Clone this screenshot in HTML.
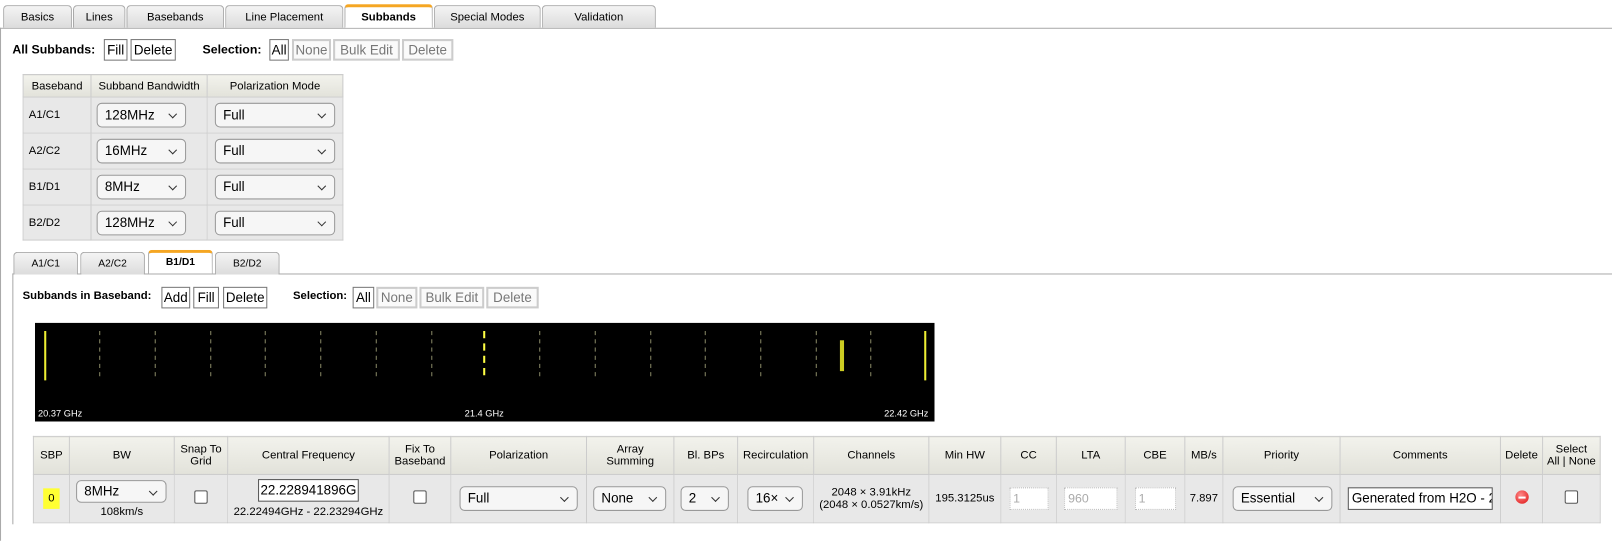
<!DOCTYPE html><html><head><style>
*{box-sizing:border-box}
body{margin:0;width:1612px;height:526px;background:#fff;font-family:"Liberation Sans",Arial,sans-serif;position:relative;overflow:hidden;color:#000}
#w{position:absolute;left:0;top:0;width:1568px;height:512px;transform:scale(1.02806);transform-origin:0 0}
.a{position:absolute}
.tab{position:absolute;height:22px;background:linear-gradient(#f4f4f4,#dcdcdc);border:1px solid #aaa;border-bottom:none;border-radius:4px 4px 0 0;font-size:11px;text-align:center;line-height:22px}
.tab.on{background:#fff;border-top:3px solid #f5a623;font-weight:bold;height:23px;line-height:20px}
.btn{position:absolute;height:21px;border:1px solid #777;background:#fff;font-size:13px;line-height:19px;text-align:center;padding:0}
.btn.dis{color:#777;border:2px solid #ccc;background:#fafafa;line-height:17px}
.lbl{position:absolute;font-size:12px;font-weight:bold}
.sel{position:absolute;height:24px;border:1px solid #999;border-radius:5px;background:#f6f6f6;font-size:13px;line-height:22px;padding-left:7px}
.sel:after{content:"";position:absolute;right:9px;top:7px;width:5px;height:5px;border-right:1.5px solid #333;border-bottom:1.5px solid #333;transform:rotate(45deg)}
table{border-collapse:collapse;position:absolute}
td,th{border:1px solid #ccc;padding:0;font-size:11px;font-weight:normal}
th{background:linear-gradient(#f2f2ec,#e2e2da);text-align:center}
td{background:#e8e8e8;position:relative}
.cb{display:inline-block;width:13px;height:13px;border:1px solid #555;border-radius:2px;background:#fff}
.inp{display:inline-block;background:#fff;border:1px dotted #bbb;color:#aaa;font-size:12px;height:22px;line-height:20px;text-align:left;padding-left:3px}
</style></head><body><div id="w">
<div class="a" style="left:0;top:27px;width:1612px;height:1px;background:#aaa"></div>
<div class="a" style="left:0;top:27px;width:1px;height:499px;background:#aaa"></div>
<div class="tab" style="left:3px;top:5px;width:67px">Basics</div>
<div class="tab" style="left:71px;top:5px;width:51px">Lines</div>
<div class="tab" style="left:123px;top:5px;width:95px">Basebands</div>
<div class="tab" style="left:219px;top:5px;width:115px">Line Placement</div>
<div class="tab on" style="left:335px;top:4px;width:86px">Subbands</div>
<div class="tab" style="left:422px;top:5px;width:104px">Special Modes</div>
<div class="tab" style="left:527px;top:5px;width:111px">Validation</div>

<div class="lbl" style="left:12px;top:41px">All Subbands:</div>
<div class="btn" style="left:101px;top:38px;width:23px">Fill</div>
<div class="btn" style="left:127px;top:38px;width:44px">Delete</div>
<div class="lbl" style="left:197px;top:41px">Selection:</div>
<div class="btn" style="left:262px;top:38px;width:19px">All</div>
<div class="btn dis" style="left:284px;top:38px;width:38px">None</div>
<div class="btn dis" style="left:324px;top:38px;width:65px">Bulk Edit</div>
<div class="btn dis" style="left:391px;top:38px;width:50px">Delete</div>

<table style="left:22px;top:72px;width:312px">
<tr style="height:22px"><th style="width:66px">Baseband</th><th style="width:113px">Subband Bandwidth</th><th>Polarization Mode</th></tr>
<tr style="height:35px"><td style="padding-left:5px">A1/C1</td><td><div class="sel" style="left:5px;top:5px;width:87px">128MHz</div></td><td><div class="sel" style="left:7px;top:5px;width:117px">Full</div></td></tr>
<tr style="height:35px"><td style="padding-left:5px">A2/C2</td><td><div class="sel" style="left:5px;top:5px;width:87px">16MHz</div></td><td><div class="sel" style="left:7px;top:5px;width:117px">Full</div></td></tr>
<tr style="height:35px"><td style="padding-left:5px">B1/D1</td><td><div class="sel" style="left:5px;top:5px;width:87px">8MHz</div></td><td><div class="sel" style="left:7px;top:5px;width:117px">Full</div></td></tr>
<tr style="height:34px"><td style="padding-left:5px">B2/D2</td><td><div class="sel" style="left:5px;top:5px;width:87px">128MHz</div></td><td><div class="sel" style="left:7px;top:5px;width:117px">Full</div></td></tr>
</table>

<div class="a" style="left:12px;top:266px;width:1600px;height:1px;background:#aaa"></div>
<div class="a" style="left:12px;top:266px;width:1px;height:244px;background:#aaa"></div>
<div class="tab" style="left:13px;top:245px;width:63px;font-size:10px">A1/C1</div>
<div class="tab" style="left:78px;top:245px;width:63px;font-size:10px">A2/C2</div>
<div class="tab on" style="left:144px;top:243px;width:63px;font-size:10px">B1/D1</div>
<div class="tab" style="left:209px;top:245px;width:63px;font-size:10px">B2/D2</div>

<div class="lbl" style="left:22px;top:282px;font-size:11px">Subbands in Baseband:</div>
<div class="btn" style="left:157px;top:279px;width:28px">Add</div>
<div class="btn" style="left:188px;top:279px;width:25px">Fill</div>
<div class="btn" style="left:217px;top:279px;width:43px">Delete</div>
<div class="lbl" style="left:285px;top:282px;font-size:11px">Selection:</div>
<div class="btn" style="left:343px;top:279px;width:21px">All</div>
<div class="btn dis" style="left:366px;top:279px;width:40px">None</div>
<div class="btn dis" style="left:408px;top:279px;width:63px">Bulk Edit</div>
<div class="btn dis" style="left:473px;top:279px;width:51px">Delete</div>

<svg class="a" style="left:34px;top:314px" width="875" height="96">
<rect width="875" height="96" fill="#000"/>
<line x1="10" y1="8" x2="10" y2="56" stroke="#ee3" stroke-width="2"/>
<g stroke="#886" stroke-width="1" stroke-dasharray="4,4">
<line x1="63" y1="8" x2="63" y2="56"/><line x1="117" y1="8" x2="117" y2="56"/><line x1="171" y1="8" x2="171" y2="56"/><line x1="224" y1="8" x2="224" y2="56"/><line x1="278" y1="8" x2="278" y2="56"/><line x1="332" y1="8" x2="332" y2="56"/><line x1="386" y1="8" x2="386" y2="56"/><line x1="491" y1="8" x2="491" y2="56"/><line x1="545" y1="8" x2="545" y2="56"/><line x1="599" y1="8" x2="599" y2="56"/><line x1="652" y1="8" x2="652" y2="56"/><line x1="706" y1="8" x2="706" y2="56"/><line x1="760" y1="8" x2="760" y2="56"/><line x1="813" y1="8" x2="813" y2="56"/>
</g>
<line x1="437" y1="8" x2="437" y2="56" stroke="#ff4" stroke-width="2" stroke-dasharray="7,5"/>
<rect x="783" y="17" width="4" height="30" fill="#cc2"/>
<line x1="866" y1="8" x2="866" y2="56" stroke="#ee3" stroke-width="2"/>
<g fill="#fff" font-size="9" font-family="Liberation Sans,sans-serif"><text x="3" y="91">20.37 GHz</text><text x="418" y="91">21.4 GHz</text><text x="826" y="91">22.42 GHz</text></g>
</svg>

<table style="left:32px;top:424px;width:1525px;text-align:center">
<tr style="height:37px"><th style="width:35px">SBP</th><th style="width:102px">BW</th><th style="width:52px">Snap To<br>Grid</th><th style="width:157px">Central Frequency</th><th style="width:60px">Fix To<br>Baseband</th><th style="width:132px">Polarization</th><th style="width:85px">Array<br>Summing</th><th style="width:62px">Bl. BPs</th><th style="width:74px">Recirculation</th><th style="width:112px">Channels</th><th style="width:70px">Min HW</th><th style="width:54px">CC</th><th style="width:67px">LTA</th><th style="width:58px">CBE</th><th style="width:37px">MB/s</th><th style="width:114px">Priority</th><th style="width:156px">Comments</th><th style="width:41px">Delete</th><th>Select<br>All | None</th></tr>
<tr style="height:47px">
<td><span style="display:inline-block;background:#ff3;width:16px;height:20px;line-height:20px">0</span></td>
<td><div class="sel" style="left:6px;top:5px;width:88px;height:22px;line-height:20px;text-align:left">8MHz</div><div style="position:absolute;top:30px;width:100%">108km/s</div></td>
<td><span class="cb"></span></td>
<td><div style="position:absolute;left:29px;top:4px;width:98px;height:22px;border:1px solid #555;background:#fff;font-size:13px;line-height:20px;overflow:hidden;white-space:nowrap">22.228941896G</div><div style="position:absolute;top:30px;width:100%">22.22494GHz - 22.23294GHz</div></td>
<td><span class="cb"></span></td>
<td><div class="sel" style="left:8px;top:11px;width:115px;text-align:left">Full</div></td>
<td><div class="sel" style="left:6px;top:11px;width:71px;text-align:left">None</div></td>
<td><div class="sel" style="left:6px;top:11px;width:47px;text-align:left">2</div></td>
<td><div class="sel" style="left:9px;top:11px;width:54px;text-align:left">16×</div></td>
<td>2048 × 3.91kHz<br>(2048 × 0.0527km/s)</td>
<td>195.3125us</td>
<td><span class="inp" style="width:38px">1</span></td>
<td><span class="inp" style="width:52px">960</span></td>
<td><span class="inp" style="width:40px">1</span></td>
<td>7.897</td>
<td><div class="sel" style="left:9px;top:11px;width:97px;text-align:left">Essential</div></td>
<td><div style="position:absolute;left:7px;top:12px;width:141px;height:22px;border:1px solid #555;background:#fff;font-size:13px;line-height:20px;overflow:hidden;white-space:nowrap;text-align:left;padding-left:3px">Generated from H2O - 2</div></td>
<td><span style="display:inline-block;width:13px;height:13px;border-radius:50%;background:radial-gradient(circle at 40% 35%,#f88,#d11);position:relative"><span style="position:absolute;left:3px;top:5.5px;width:7px;height:2px;background:#fff"></span></span></td>
<td><span class="cb"></span></td>
</tr></table>
</div></body></html>
